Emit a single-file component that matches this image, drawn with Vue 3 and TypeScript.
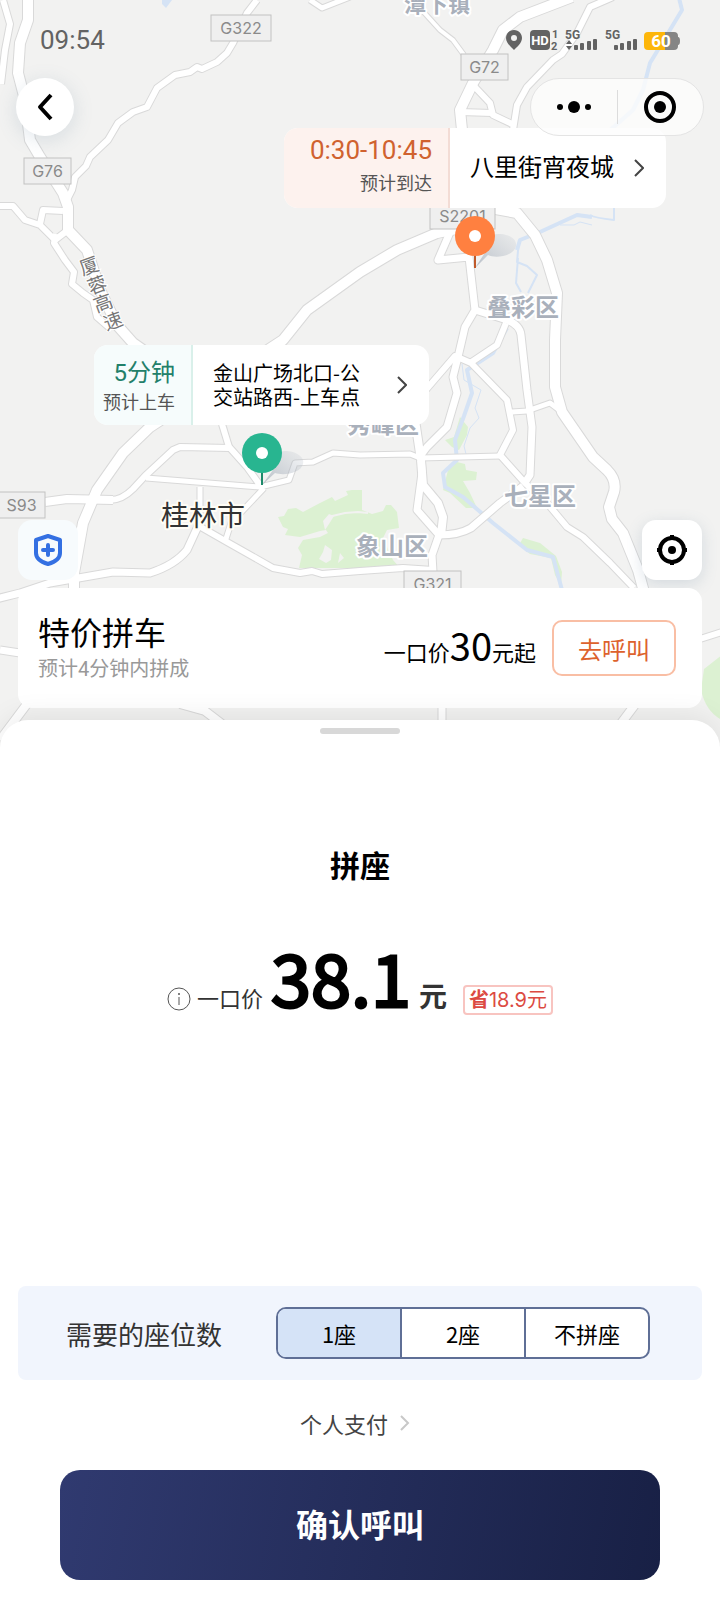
<script setup lang="ts">
import { ref } from 'vue'

interface Road { d: string; w: number }
interface Shield { text: string; x: number; y: number; w: number }
interface Label { text: string; x: number; y: number; size: number }

const roads: Road[] = [
  { w: 6, d: 'M3 0L10 24L5 50L1 84' },
  { w: 10, d: 'M28 -4V20L20 43L18 73L25 100L30 140L40 157L63 193L68 207V230L87 250L100 290L117 325L133 343L160 362' },
  { w: 6, d: 'M257 0L247 13L233 43L227 53L217 62L202 69L197 67L190 72L175 75L157 88L147 107L133 112L118 123L108 140L90 157L86 166L75 177L72 190L67 200' },
  { w: 6, d: 'M0 206H13L25 220L40 225L55 240L68 230' },
  { w: 6, d: 'M40 224L43 210L63 211' },
  { w: 6, d: 'M56 234L54 243L65 260L74 272L72 284L83 293L93 300L97 317L112 330' },
  { w: 5, d: 'M310 0L322 8L350 -3' },
  { w: 4, d: 'M420 8L440 30L453 40L464 55' },
  { w: 10, d: 'M572 -3L520 17L503 30L493 50L473 83L460 110L463 140L490 208L517 213L535 235L547 260L557 293L555 340V387L562 412L593 457L607 470Q617 480 614 492L609 507L612 519L623 533L638 570L644 592' },
  { w: 6, d: 'M613 -3L590 7L577 33L562 54L553 60L527 87L517 105L513 130' },
  { w: 6, d: 'M473 85L490 103L493 115L512 124' },
  { w: 6, d: 'M460 112L492 113' },
  { w: 10, d: 'M456 229L437 233L397 250L360 272L307 310L283 340L150 427L123 453L97 490L83 523L74 573V592' },
  { w: 7, d: 'M451 230L438 260L469 257L475 310L465 327L458 357L453 377L457 393L447 427L427 447L421 455L422 473L417 510L439 535L432 555L433 572' },
  { w: 7, d: 'M475 310L507 320Q520 325 521 335L527 390L532 427L530 475L524 484' },
  { w: 6, d: 'M506 323L497 345L470 363' },
  { w: 6, d: 'M424 392L455 356L471 363L507 400L513 430L500 455L525 483L547 503L567 527L583 537L610 563L634 588' },
  { w: 5, d: 'M512 412L527 411L550 403L562 412' },
  { w: 5, d: 'M146 478L260 487L289 480L295 463L313 462L333 453L360 455L410 454L420 458L500 456' },
  { w: 8, d: 'M45 502L67 499L113 500' },
  { w: 6, d: 'M110 500Q122 500 133 489L145 476L173 450L180 447L230 448L247 467L262 488' },
  { w: 6, d: 'M222 424L229 447' },
  { w: 5, d: 'M200 487V520' },
  { w: 7, d: 'M199 524L187 550Q175 565 150 573L113 572L67 580L50 583L20 593L-4 599' },
  { w: 6, d: 'M199 526L227 542L273 568L300 573L312 571L322 574L360 571L403 568L433 570' },
  { w: 5, d: 'M225 542L231 523L264 488' },
  { w: 8, d: 'M421 460L423 485L438 503L443 517L441 535' },
  { w: 7, d: 'M439 535Q459 535 471 528L500 503L523 486' },
  { w: 8, d: 'M415 420L421 460' },
  { w: 7, d: 'M0 650L20 653' },
  { w: 8, d: 'M30 700L0 740' },
  { w: 8, d: 'M180 704L205 711L222 724' },
  { w: 7, d: 'M442 700V726' },
  { w: 8, d: 'M640 698L616 730' },
  { w: 6, d: 'M700 639L722 632' }
]

const rivers: Road[] = [
  { w: 4, d: 'M679 -2L682 10L650 63L643 90L633 110L608 132' },
  { w: 2, d: 'M614 206V220Q595 218 590 215' },
  { w: 4, d: 'M592 217L577 215L540 232L520 240L517 250' },
  { w: 2, d: 'M519 240L517 262L527 266L537 275L528 293M518 258L516 283L521 292' },
  { w: 4, d: 'M507 328L493 353L467 370L472 393L464 416L455 440L457 460L443 473L445 487L463 497L493 523L527 550L553 557L562 590' },
  { w: 1, d: 'M462 364L464 380L481 390L475 408L479 418L470 428L464 446L467 458' },
  { w: 1, d: 'M560 225H574L580 222L592 225' }
]

const greens: string[] = [
  'M460 417L468 427L467 435L459 450L452 447L445 440L454 437Z',
  'M457 462L465 464L466 470L477 472L476 480L463 481L470 493L477 508L466 508L450 493L443 490L448 470Z',
  'M523 538L540 543L556 556L562 572L561 585L555 575L551 558L530 554L519 545Z',
  'M278 517L284 516L288 509L296 508L303 512L320 503L332 497L335 501L348 495L346 491L352 490L362 490V510L372 514L383 511L386 505L391 505L397 512L399 528L387 530L383 538L393 560L400 568H299L302 555L298 548L303 540L320 537L328 533L326 530L320 531L300 537L285 535L288 529L283 527Z',
  'M722 655L704 669L701 690Q706 712 722 720Z'
]

const shields: Shield[] = [
  { text: 'G322', x: 211, y: 14, w: 60 },
  { text: 'G72', x: 461, y: 53, w: 47 },
  { text: 'G76', x: 24, y: 157, w: 47 },
  { text: 'S2201', x: 430, y: 202, w: 65 },
  { text: 'S93', x: -2, y: 491, w: 47 },
  { text: 'G321', x: 404, y: 570, w: 57 }
]

const districts: Label[] = [
  { text: '潭下镇', x: 404, y: 12, size: 22 },
  { text: '叠彩区', x: 487, y: 316, size: 24 },
  { text: '秀峰区', x: 347, y: 433, size: 24 },
  { text: '七星区', x: 504, y: 505, size: 24 },
  { text: '象山区', x: 356, y: 555, size: 24 }
]

const roadName: Label[] = [
  { text: '厦', x: 89, y: 266, size: 19 },
  { text: '蓉', x: 97, y: 285, size: 19 },
  { text: '高', x: 103, y: 303, size: 19 },
  { text: '速', x: 113, y: 321, size: 19 }
]

const seats: string[] = ['1座', '2座', '不拼座']
const seat = ref('1座')
</script>

<template>
  <div class="page">
    <section class="map">
      <svg class="canvas" viewBox="0 0 720 760" preserveAspectRatio="xMidYMin slice" aria-hidden="true">
        <rect width="720" height="760" fill="#f2f2f1" />
        <path v-for="(g, i) in greens" :key="'g' + i" :d="g" fill="#dcf1d2" />
        <path d="M325 530L323 521L329 514L334 516L329 524ZM325 545L332 550L331 560L326 563L319 559L323 552ZM340 553L344 558L338 563Z" fill="#f2f2f1" />
        <path d="M328 517L345 513L358 512L368 513" fill="none" stroke="#f2f2f1" stroke-width="2" />
        <path d="M162 0H172L166 8L162 4Z" fill="#d5e3f5" />
        <path v-for="(r, i) in rivers" :key="'w' + i" :d="r.d" :stroke-width="r.w" stroke="#d5e3f5" fill="none" stroke-linejoin="round" />
        <path v-for="(r, i) in roads" :key="'c' + i" :d="r.d" :stroke-width="r.w + 2" stroke="#d9d9d9" fill="none" stroke-linejoin="round" />
        <path v-for="(r, i) in roads" :key="'r' + i" :d="r.d" :stroke-width="r.w" stroke="#ffffff" fill="none" stroke-linejoin="round" />
        <g v-for="s in shields" :key="s.text">
          <rect :x="s.x" :y="s.y + 1" :width="s.w" height="26" fill="#efefef" stroke="#c2c2c2" />
          <text :x="s.x + s.w / 2" :y="s.y + 20" class="shield-text">{{ s.text }}</text>
        </g>
        <text v-for="d in districts" :key="d.text" :x="d.x" :y="d.y" :font-size="d.size" class="district">{{ d.text }}</text>
        <text x="161" y="526" class="city">桂林市</text>
        <text v-for="c in roadName" :key="c.text" :font-size="c.size" :transform="`translate(${c.x} ${c.y}) rotate(-20)`" y="7" class="road-name">{{ c.text }}</text>

        <defs>
          <linearGradient id="pinShade" x1="0" x2="1" y1="1" y2="0">
            <stop offset="0" stop-color="#8f9bab" stop-opacity=".6" />
            <stop offset="1" stop-color="#b4bcc6" stop-opacity=".15" />
          </linearGradient>
        </defs>
        <path d="M475 268L486 251C480 238 490 233 501 234C511 235 517 240 516 246C514 256 496 259 488 255Z" fill="url(#pinShade)" />
        <path d="M475 255V268" stroke="#c05a2a" stroke-width="2" />
        <circle cx="475" cy="236" r="20" fill="#ff8040" />
        <circle cx="475" cy="236" r="6" fill="#fff" />
        <path d="M262 485L273 470C268 456 276 451 287 451C298 452 305 458 303 464C301 473 284 476 275 473Z" fill="url(#pinShade)" />
        <path d="M262 472V485" stroke="#1f8a6b" stroke-width="2" />
        <circle cx="262" cy="453" r="20" fill="#28b590" />
        <circle cx="262" cy="453" r="6" fill="#fff" />
      </svg>

      <button class="callout dropoff" type="button">
        <span class="eta">
          <span class="eta-time">0:30-10:45</span>
          <span class="eta-note">预计到达</span>
        </span>
        <span class="place">
          <span class="place-name">八里街宵夜城</span>
          <svg class="arrow" viewBox="0 0 10 18"><path d="M1 1L9 9L1 17" /></svg>
        </span>
      </button>
      <button class="callout pickup" type="button">
        <span class="eta">
          <span class="eta-time">5分钟</span>
          <span class="eta-note">预计上车</span>
        </span>
        <span class="place">
          <span class="place-name">金山广场北口-公<br>交站路西-上车点</span>
          <svg class="arrow" viewBox="0 0 10 18"><path d="M1 1L9 9L1 17" /></svg>
        </span>
      </button>

      <header class="status">
        <time class="clock">09:54</time>
        <svg class="indicators" width="176" height="28" viewBox="504 26 176 28" role="img" aria-label="状态">
          <path d="M514 30C519 30 522 34 522 38C522 43 517 47 514 50C511 47 506 43 506 38C506 34 509 30 514 30Z" fill="#636363" />
          <circle cx="514" cy="38" r="3" fill="#f2f2f1" />
          <rect x="530" y="30" width="20" height="20" rx="4" fill="#636363" />
          <text x="540" y="45" font-size="13" font-weight="700" text-anchor="middle" fill="#fff">HD</text>
          <g fill="#636363" font-weight="700">
            <text x="552" y="38" font-size="11">1</text>
            <text x="551" y="50" font-size="11">2</text>
            <text x="565" y="39" font-size="12">5G</text>
            <text x="605" y="39" font-size="12">5G</text>
          </g>
          <path d="M566 44L569 40L572 44ZM566 46L569 50L572 46Z" fill="#636363" />
          <g fill="#636363">
            <rect x="574" y="45" width="4" height="5" rx="1" /><rect x="580" y="43" width="4" height="7" rx="1" />
            <rect x="587" y="41" width="4" height="9" rx="1" /><rect x="593" y="39" width="4" height="11" rx="1" />
            <rect x="614" y="45" width="4" height="5" rx="1" /><rect x="620" y="43" width="4" height="7" rx="1" />
            <rect x="627" y="41" width="4" height="9" rx="1" /><rect x="633" y="39" width="4" height="11" rx="1" />
          </g>
          <path d="M664 32H674Q678 32 678 36V37Q680 37 680 41Q680 45 678 45V46Q678 50 674 50H664Z" fill="#858585" />
          <path d="M648 32H665V50H648Q644 50 644 46V36Q644 32 648 32Z" fill="#fdb60a" />
          <text x="661" y="47" font-size="17" font-weight="700" text-anchor="middle" fill="#fff">60</text>
        </svg>
      </header>

      <nav class="nav">
        <button class="back" type="button" aria-label="返回">
          <svg width="16" height="28" viewBox="0 0 16 28"><path d="M14 2L3 14L14 26" fill="none" stroke="#000" stroke-width="4" stroke-linejoin="round" /></svg>
        </button>
        <div class="capsule">
          <button type="button" aria-label="更多">
            <svg width="36" height="12" viewBox="0 0 36 12"><circle cx="4" cy="6" r="3" /><circle cx="18" cy="6" r="6" /><circle cx="32" cy="6" r="3" /></svg>
          </button>
          <span class="divider"></span>
          <button type="button" aria-label="关闭">
            <svg width="32" height="32" viewBox="0 0 32 32"><circle cx="16" cy="16" r="14" fill="none" stroke="#000" stroke-width="4" /><circle cx="16" cy="16" r="6" /></svg>
          </button>
        </div>
      </nav>

      <div class="tools">
        <button class="tool safety" type="button" aria-label="安全中心">
          <svg width="30" height="34" viewBox="0 0 30 34" fill="none" stroke="#3470e2">
            <path d="M15 3L27 7V20C27 25 22 29 15 31C8 29 3 25 3 20V7Z" stroke-width="4" stroke-linejoin="round" />
            <path d="M15 12V22M10 17H20" stroke-width="4" stroke-linecap="round" />
          </svg>
        </button>
        <button class="tool locate" type="button" aria-label="定位">
          <svg width="32" height="32" viewBox="0 0 32 32" fill="none" stroke="#000" stroke-width="4">
            <circle cx="16" cy="16" r="12" /><path d="M16 1V6M16 26V31M1 16H6M26 16H31" /><circle cx="16" cy="16" r="4" fill="#000" stroke="none" />
          </svg>
        </button>
      </div>

      <article class="promo">
        <div class="promo-info">
          <h2>特价拼车</h2>
          <p>预计4分钟内拼成</p>
        </div>
        <p class="promo-price">一口价<strong>30</strong>元起</p>
        <button class="promo-call" type="button">去呼叫</button>
      </article>
    </section>

    <main class="sheet">
      <span class="handle"></span>
      <h1>拼座</h1>
      <div class="fare">
        <button class="info" type="button" aria-label="价格说明">
          <svg width="24" height="24" viewBox="0 0 24 24" fill="none" stroke="#555">
            <circle cx="12" cy="12" r="11" /><path d="M12 10V18" /><circle cx="12" cy="7" r="1" fill="#555" stroke="none" />
          </svg>
        </button>
        <span class="fare-type">一口价</span>
        <strong class="amount">38.1</strong>
        <span class="unit">元</span>
        <span class="saving"><b>省</b>18.9元</span>
      </div>

      <fieldset class="seats">
        <legend class="sr-only">座位选择</legend>
        <div class="seats-row">
          <span class="seats-label">需要的座位数</span>
          <div class="segments">
            <label v-for="s in seats" :key="s" class="segment" :class="{ active: seat === s }">
              <input v-model="seat" class="sr-only" type="radio" name="seat" :value="s">
              {{ s }}
            </label>
          </div>
        </div>
      </fieldset>

      <button class="pay" type="button">
        个人支付
        <svg width="10" height="16" viewBox="0 0 10 16"><path d="M1 1L8 8L1 15" fill="none" stroke="#c8c8c8" stroke-width="2" /></svg>
      </button>
      <button class="confirm" type="button">确认呼叫</button>
    </main>
  </div>
</template>

<style>
body { margin: 0; background: #fff; }
</style>

<style scoped>
* { box-sizing: border-box; }
.page {
  display: flex;
  flex-direction: column;
  min-height: 100vh;
  overflow: hidden;
  background: #fff;
  color: #000;
  font-family: "Noto Sans CJK SC", sans-serif;
}
button { margin: 0; padding: 0; border: 0; background: none; color: inherit; font: inherit; cursor: pointer; }
h1, h2, p { margin: 0; font-weight: 400; }
svg { display: block; flex: none; }
.sr-only { position: absolute; width: 1px; height: 1px; overflow: hidden; opacity: 0; }

.map { position: relative; display: flex; flex-direction: column; min-height: 760px; padding-bottom: 52px; background: #f2f2f1; }
.canvas { position: absolute; top: 0; left: 0; width: 100%; height: 100%; }
.shield-text { font: 16px Inter, sans-serif; fill: #8a8a8a; text-anchor: middle; }
.district { font-weight: 700; fill: #a9b0bb; stroke: #fff; stroke-width: 4px; stroke-linejoin: round; paint-order: stroke; }
.city { font-size: 28px; fill: #333; stroke: #fffdf5; stroke-width: 4px; stroke-linejoin: round; paint-order: stroke; }
.road-name { fill: #777; stroke: #fff; stroke-width: 2px; paint-order: stroke; text-anchor: middle; }

.status { position: relative; display: flex; align-items: center; justify-content: space-between; height: 78px; padding: 2px 40px 0; }
.clock { color: #636363; font: 26px/28px Roboto, sans-serif; }
.indicators { font-family: Roboto, sans-serif; }

.nav { position: relative; display: flex; align-items: center; justify-content: space-between; padding: 0 16px; }
.back { display: grid; place-items: center; width: 58px; height: 58px; border-radius: 50%; background: #fff; box-shadow: 0 4px 20px rgba(90, 120, 150, .18); }
.capsule { display: flex; align-items: center; width: 174px; height: 58px; border: 1px solid #e4e4e4; border-radius: 29px; background: rgba(253, 253, 253, .8); }
.capsule button { display: grid; flex: 1; place-items: center; height: 100%; }
.divider { width: 1px; height: 34px; background: #dcdcdc; }

.callout { position: absolute; display: flex; height: 80px; overflow: hidden; border-radius: 14px; background: #fff; }
.dropoff { top: 128px; left: calc(50% - 76px); width: 382px; }
.pickup { top: 345px; left: calc(50% - 266px); width: 335px; }
.eta { display: flex; flex: none; flex-direction: column; justify-content: center; height: 100%; padding-right: 16px; text-align: right; }
.dropoff .eta { width: 166px; padding-bottom: 4px; border-right: 2px solid #f3dcd5; background: #fdf2ee; }
.pickup .eta { width: 99px; padding-top: 4px; border-right: 2px solid #d9f0ea; background: #f6fcfc; }
.eta-time { font-family: Roboto, "Noto Sans CJK SC", sans-serif; font-size: 24px; line-height: 28px; }
.dropoff .eta-time { color: #d0622f; font-size: 26px; line-height: 32px; }
.pickup .eta-time { color: #23806a; }
.eta-note { color: #555; font-size: 18px; line-height: 28px; }
.dropoff .eta-note { line-height: 32px; }
.place { display: flex; flex: 1; align-items: center; justify-content: space-between; height: 100%; padding: 0 22px 0 20px; text-align: left; }
.place-name { font-size: 24px; }
.dropoff .place-name { padding-bottom: 6px; }
.pickup .place-name { font-size: 20px; line-height: 24px; }
.arrow { width: 10px; height: 18px; fill: none; stroke: #444; stroke-width: 2px; }

.tools { position: relative; display: flex; justify-content: space-between; margin-top: auto; padding: 0 18px 8px; }
.tool { display: grid; place-items: center; width: 60px; height: 60px; border-radius: 14px; }
.safety { background: #f7fbfd; }
.locate { background: #fff; box-shadow: 0 4px 16px rgba(90, 120, 150, .2); }

.promo { position: relative; display: flex; align-items: center; height: 120px; margin: 0 18px; padding: 0 26px 0 20px; border-radius: 14px; background: #fff; }
.promo-info { flex: 1; }
.promo-info h2 { margin-bottom: 6px; font-size: 32px; line-height: 36px; }
.promo-info p { color: #999; font: 20px/28px Roboto, "Noto Sans CJK SC", sans-serif; }
.promo-price { font-size: 22px; line-height: 56px; white-space: nowrap; }
.promo-price strong { font-size: 38px; font-weight: 400; }
.promo-call { width: 124px; height: 56px; margin-left: 16px; border: 2px solid #f9bea4; border-radius: 10px; color: #dd622d; font-size: 24px; }

.sheet { position: relative; display: flex; flex: 1; flex-direction: column; align-items: center; margin-top: -40px; padding: 8px 18px 20px; border-radius: 28px 28px 0 0; background: #fff; box-shadow: 0 -4px 28px rgba(0, 0, 0, .08); }
.handle { width: 80px; height: 6px; border-radius: 3px; background: #d8d8d8; }
h1 { margin-top: 108px; font-size: 30px; font-weight: 700; line-height: 44px; }
.fare { display: flex; align-items: baseline; margin: 40px 0; line-height: 100px; }
.info { align-self: center; margin: 24px 6px 0 0; }
.fare-type { color: #333; font-size: 22px; }
.amount { margin-left: 8px; font-size: 72px; font-weight: 400; -webkit-text-stroke: 3px #000; }
.unit { margin-left: 8px; color: #333; font-size: 28px; font-weight: 700; }
.saving { margin-left: 16px; padding: 0 4px; border: 2px solid #f8c4c0; border-radius: 4px; color: #dc4a42; font: 20px/26px Inter, "Noto Sans CJK SC", sans-serif; }
.saving b { font-weight: 700; }

.seats { width: 100%; min-width: 0; margin: auto 0 0; padding: 0; border: 0; border-radius: 8px; background: #f1f5fd; }
.seats-row { display: flex; align-items: center; justify-content: space-between; height: 94px; padding: 0 52px 0 48px; }
.seats-label { color: #333; font-size: 26px; }
.segments { display: flex; width: 374px; height: 52px; overflow: hidden; border: 2px solid #5f6f96; border-radius: 10px; background: #fff; }
.segment { position: relative; display: grid; flex: 1; place-items: center; font-size: 22px; cursor: pointer; }
.segment + .segment { border-left: 2px solid #5f6f96; }
.segment.active { background: #d5e3f7; }
.pay { display: flex; align-items: center; gap: 12px; height: 90px; padding: 0 10px 4px 0; color: #444; font-size: 22px; }
.confirm { width: calc(100% - 84px); height: 110px; padding-bottom: 4px; border-radius: 20px; background: linear-gradient(100deg, #303a70, #182045); color: #fff; font-size: 32px; font-weight: 700; }
</style>
